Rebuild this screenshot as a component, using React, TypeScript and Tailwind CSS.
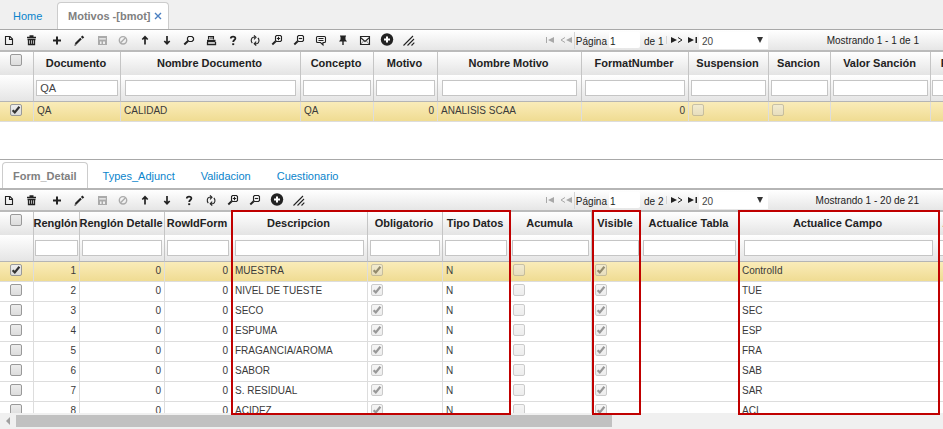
import React from 'react';

type Align = 'left' | 'right';

interface Column {
  title: string;
  width: number;
  align?: Align;
  filter?: string;
}

type Cell = string | boolean;

interface Row {
  selected: boolean;
  cells: Cell[];
}

type IconName =
  | 'new' | 'delete' | 'add' | 'edit' | 'save' | 'cancel' | 'up' | 'down' | 'search' | 'print'
  | 'help' | 'refresh' | 'zoomIn' | 'zoomOut' | 'comment' | 'pin' | 'mail' | 'plusCircle' | 'resize';

const shapes: Record<IconName, React.ReactNode> = {
  new: (
    <>
      <path d="M3.5 3.5H8L10.5 6V11.5H3.5Z" />
      <path d="M7.5 3.5V6.5H10.5" />
    </>
  ),
  delete: (
    <>
      <path d="M3 4.5H12M5.5 3H9.5" strokeWidth="1.3" />
      <path d="M3.5 6.5H11.5M4.5 6V11.5H10.5V6M6.5 7V11M8.5 7V11" strokeWidth="1.3" />
    </>
  ),
  add: <path d="M7 3.5V11.5M3 7.5H11" strokeWidth="2" />,
  edit: (
    <>
      <path d="M3.5 11L9 5.5" strokeWidth="2.2" />
      <path d="M9.8 4.8L11.3 3.3" strokeWidth="2.6" />
      <path d="M2.5 12.2L4 11.8" />
    </>
  ),
  save: (
    <>
      <path d="M4 3H13V12H4ZM5.200 5.200V6.500H11.800V5.200ZM6 8.500V11H7.500V8.500ZM9 8.500V11H11V8.500Z" fill="currentColor" fillRule="evenodd" stroke="none" />
    </>
  ),
  cancel: (
    <>
      <circle cx="7" cy="7.3" r="3.7" strokeWidth="1.4" />
      <path d="M4.5 9.8L9.5 4.8" strokeWidth="1.4" />
    </>
  ),
  up: <path d="M7 11.5V4M4.3 6.5L7 3.8L9.7 6.5" strokeWidth="1.7" />,
  down: <path d="M7 3V10.5M4.3 8L7 10.7L9.7 8" strokeWidth="1.7" />,
  search: (
    <>
      <path d="M6.5 3.500H10L11.500 5V7L10 8.500H7L5.500 7V5Z" strokeWidth="1.2" />
      <path d="M6 8L2.3 11.5" strokeWidth="2" />
    </>
  ),
  print: (
    <>
      <path d="M4.5 6.5V3.5H9.5V6.5M5.5 5H9" />
      <path d="M3 8H11.5" strokeWidth="2.4" />
      <path d="M3.5 9V11.5H11.5V9M4 11.5H11" strokeWidth="1.3" />
    </>
  ),
  help: (
    <>
      <path d="M4.8 5.4C4.8 3 9.4 3 9.4 5.3C9.4 7 7.2 7 7.2 9" strokeWidth="1.8" />
      <path d="M6.2 11.2H8.2" strokeWidth="1.8" />
    </>
  ),
  refresh: (
    <>
      <path d="M7 4.3H5.2C3 4.8 2.6 8.4 4.3 10M6 2.3L8 4.3L6 6.3" />
      <path d="M7 10.7H8.8C11.3 10.2 11.6 6.6 9.900 5M8.2 8.7L6.2 10.7L8.2 12.7" />
    </>
  ),
  zoomIn: (
    <>
      <path d="M6.500 2.500H10.500L11.500 3.500V7.500L10.500 8.500H6.500L5.500 7.500V3.500Z" />
      <path d="M6.8 5.5H10.2M8.5 3.8V7.2" />
      <path d="M5.7 8.2L2.3 11.5" strokeWidth="1.9" />
    </>
  ),
  zoomOut: (
    <>
      <path d="M6.500 2.500H10.500L11.500 3.500V7.500L10.500 8.500H6.500L5.500 7.500V3.500Z" />
      <path d="M6.8 5.5H10.2" />
      <path d="M5.7 8.2L2.3 11.5" strokeWidth="1.9" />
    </>
  ),
  comment: (
    <>
      <path d="M3.5 3.5H10.5Q11.5 3.5 11.5 4.5V8.5Q11.5 9.5 10.5 9.5H9V12L6.5 9.5H3.5Q2.5 9.5 2.5 8.5V4.5Q2.5 3.5 3.5 3.5Z" />
      <path d="M4.5 5.5H9.5M4.5 7.5H9.5" />
    </>
  ),
  pin: (
    <>
      <path d="M4 2.500H10V3.500H9.500V6.500L11 8.500H3L4.500 6.500V3.500H4Z" fill="currentColor" stroke="none" />
      <path d="M7 8V12" strokeWidth="1.4" />
    </>
  ),
  mail: (
    <>
      <path d="M2.5 3.5H11.5V11.5H2.5Z" />
      <path d="M2.5 4.500L7 8.500L11.5 4.500" />
      <path d="M3 11L5.500 8M11 11L8.500 8" strokeWidth="0.5" />
    </>
  ),
  plusCircle: (
    <>
      <circle cx="7" cy="6.5" r="6.2" fill="currentColor" stroke="none" />
      <path d="M7 3.5V9.5M4 6.5H10" stroke="#fff" strokeWidth="2" />
    </>
  ),
  resize: <path d="M1.5 12.5L11 3M5.5 12.5L12 6M9.5 12.5L12.3 9.7" />,
};

const topTools: [IconName, string][] = [
  ['new', 'Nuevo'], ['delete', 'Eliminar'], ['add', 'Agregar'], ['edit', 'Editar'], ['save', 'Guardar'],
  ['cancel', 'Cancelar'], ['up', 'Subir'], ['down', 'Bajar'], ['search', 'Buscar'], ['print', 'Imprimir'],
  ['help', 'Ayuda'], ['refresh', 'Recargar'], ['zoomIn', 'Acercar'], ['zoomOut', 'Alejar'],
  ['comment', 'Comentario'], ['pin', 'Fijar'], ['mail', 'Correo'], ['plusCircle', 'Más'], ['resize', 'Ajustar'],
];

const detailOnly: IconName[] = ['search', 'print', 'comment', 'pin', 'mail'];
const detailTools = topTools.filter(([name]) => !detailOnly.includes(name));

const topColumns: Column[] = [
  { title: 'Documento', width: 87, filter: 'QA' },
  { title: 'Nombre Documento', width: 180 },
  { title: 'Concepto', width: 73 },
  { title: 'Motivo', width: 64, align: 'right' },
  { title: 'Nombre Motivo', width: 144 },
  { title: 'FormatNumber', width: 107, align: 'right' },
  { title: 'Suspension', width: 80 },
  { title: 'Sancion', width: 62 },
  { title: 'Valor Sanción', width: 100, align: 'right' },
  { title: 'P', width: 30 },
];

const topRows: Row[] = [
  { selected: true, cells: ['QA', 'CALIDAD', 'QA', '0', 'ANALISIS SCAA', '0', false, false, '', ''] },
];

const detailColumns: Column[] = [
  { title: 'Renglón', width: 46, align: 'right' },
  { title: 'Renglón Detalle', width: 85, align: 'right' },
  { title: 'RowIdForm', width: 67, align: 'right' },
  { title: 'Descripcion', width: 136 },
  { title: 'Obligatorio', width: 75 },
  { title: 'Tipo Datos', width: 67 },
  { title: 'Acumula', width: 82 },
  { title: 'Visible', width: 49 },
  { title: 'Actualice Tabla', width: 98 },
  { title: 'Actualice Campo', width: 200 },
  { title: 'A', width: 18 },
];

const details: [string, string][] = [
  ['MUESTRA', 'ControlId'],
  ['NIVEL DE TUESTE', 'TUE'],
  ['SECO', 'SEC'],
  ['ESPUMA', 'ESP'],
  ['FRAGANCIA/AROMA', 'FRA'],
  ['SABOR', 'SAB'],
  ['S. RESIDUAL', 'SAR'],
  ['ACIDEZ', 'ACI'],
];

const detailRows: Row[] = details.map(([name, field], i) => ({
  selected: i === 0,
  cells: [String(i + 1), '0', '0', name, true, 'N', false, true, '', field, ''],
}));

function Icon({ name }: { name: IconName }) {
  return (
    <svg viewBox="0 0 14 14" className="size-[14px]" fill="none" stroke="currentColor" strokeWidth="1.1" aria-hidden="true">
      {shapes[name]}
    </svg>
  );
}

function Check({ label, checked = false, disabled = false }: { label: string; checked?: boolean; disabled?: boolean }) {
  return (
    <span className={`relative block size-3 ${disabled ? 'opacity-50' : ''}`}>
      <input
        type="checkbox"
        aria-label={label}
        defaultChecked={checked}
        disabled={disabled}
        className="peer block size-3 appearance-none rounded-[2px] border border-[#999] bg-linear-to-b from-[#ededed] to-[#dcdcdc]"
      />
      <svg viewBox="0 0 12 12" className="pointer-events-none absolute inset-0 hidden size-3 peer-checked:block" fill="none" stroke="#333" strokeWidth="2.2" aria-hidden="true">
        <path d="M2.6 6.2L4.8 8.4L9.4 2.8" />
      </svg>
    </span>
  );
}

function PagerArrow({ label, disabled = false, children }: { label: string; disabled?: boolean; children: React.ReactNode }) {
  return (
    <button type="button" aria-label={label} disabled={disabled} className={disabled ? 'text-[#a8a8a8]' : 'text-[#222]'}>
      <svg viewBox="0 0 12 8" className="h-2 w-3" fill="currentColor" aria-hidden="true">
        {children}
      </svg>
    </button>
  );
}

function Toolbar({ id, tools, pages, summary }: { id: string; tools: [IconName, string][]; pages: string; summary: string }) {
  return (
    <div className="flex h-[22px] items-center border-b-2 border-[#bbb] bg-linear-to-b from-white to-[#e6e6e6] text-[10px] text-[#222]">
      <div className="flex flex-1 items-center gap-1">
        {tools.map(([name, label]) => (
          <button
            key={name}
            type="button"
            aria-label={label}
            disabled={name === 'save' || name === 'cancel'}
            className={`flex w-[18px] shrink-0 justify-center disabled:text-[#aaa] ${name === 'add' ? 'ml-1' : ''}`}
          >
            <Icon name={name} />
          </button>
        ))}
      </div>
      <div className="flex shrink-0 items-center">
        <div className="mr-[2px] flex gap-1">
          <PagerArrow label="Primera página" disabled>
            <path d="M2 1H3V7H2ZM10 1V7L4 4Z" />
          </PagerArrow>
          <PagerArrow label="Página anterior" disabled>
            <path d="M12 1V7L6 4Z" />
            <path d="M5 1.5L1 4L5 6.5" fill="none" stroke="currentColor" />
          </PagerArrow>
        </div>
        <label htmlFor={`${id}-page`} className="border-l border-[#d5d5d5] pt-[2px] pl-px">Página</label>
        <input
          id={`${id}-page`}
          defaultValue="1"
          className="ml-[2px] h-4 w-[31px] rounded-[2px] bg-white px-px pt-[2px] text-[10px]"
        />
        <span className="ml-1 w-[22px] pt-[2px]">{pages}</span>
        <div className="flex gap-1 border-l border-[#d5d5d5] pl-1">
          <PagerArrow label="Página siguiente">
            <path d="M0 1V7L6 4Z" />
            <path d="M7 1.5L11 4L7 6.5" fill="none" stroke="currentColor" />
          </PagerArrow>
          <PagerArrow label="Última página">
            <path d="M1 1V7L7 4ZM8.500 1H10V7H8.500Z" />
          </PagerArrow>
        </div>
        <div className="relative w-[69px]">
          <select
            aria-label="Registros por página"
            className="block h-[17px] w-full appearance-none bg-white pt-[2px] pl-[3px] text-[10px] text-[#444]"
          >
            <option>20</option>
          </select>
          <svg viewBox="0 0 6 6" className="pointer-events-none absolute top-[5px] right-[5px] size-[6px]" fill="#333" aria-hidden="true">
            <path d="M0 0H6L3 6Z" />
          </svg>
        </div>
      </div>
      <div className="w-[175px] shrink-0 pr-6 text-right">{summary}</div>
    </div>
  );
}

function Grid({ name, columns, rows }: { name: string; columns: Column[]; rows: Row[] }) {
  const total = columns.reduce((sum, column) => sum + column.width, 34);
  return (
    <table aria-label={name} className="table-fixed border-separate border-spacing-0" style={{ width: total }}>
      <colgroup>
        <col className="w-[34px]" />
        {columns.map((column) => (
          <col key={column.title} style={{ width: column.width }} />
        ))}
      </colgroup>
      <thead>
        <tr className="h-[23px] bg-linear-to-b from-white to-[#e4e4e4]">
          <th className="border-r border-[#c5c5c5] p-0 pt-[2px] pl-[10px] align-top">
            <Check label="Seleccionar todo" />
          </th>
          {columns.map((column) => (
            <th key={column.title} scope="col" className="border-r border-[#c5c5c5] p-0 pb-[2px] text-[11px] leading-[14px] font-bold whitespace-nowrap text-[#222]">
              <span className="flex justify-center pr-[2px]">{column.title}</span>
            </th>
          ))}
        </tr>
        <tr className="h-[27px] bg-linear-to-b from-white to-[#e4e4e4]">
          <td className="border-r border-b border-[#c5c5c5] border-b-[#b5b5b5] p-0" />
          {columns.map((column) => (
            <td key={column.title} className="border-r border-b border-[#c5c5c5] border-b-[#b5b5b5] p-0">
              <input
                aria-label={`Filtrar ${column.title}`}
                defaultValue={column.filter}
                className="mx-auto block h-4 w-[95%] border border-[#c5c5c5] bg-white px-[3px] text-[11px] text-[#444]"
              />
            </td>
          ))}
        </tr>
      </thead>
      <tbody>
        {rows.map((row, index) => (
          <tr key={index} className={`h-5 ${row.selected ? 'bg-linear-to-b from-[#faecb9] to-[#efdb90]' : 'bg-white'}`}>
            <td className="border-r border-b border-[#ddd] p-0 pt-[2px] pl-[10px] align-top">
              <Check label={`Seleccionar fila ${index + 1}`} checked={row.selected} />
            </td>
            {row.cells.map((cell, i) => (
              <td
                key={columns[i].title}
                className={`border-r border-b border-[#ddd] px-[3px] text-[10px] leading-[14px] whitespace-nowrap text-[#3a3a3a] ${
                  typeof cell === 'boolean' ? 'pt-[2px] pb-0 align-top' : 'pt-0 pb-[2px] align-middle'
                } ${columns[i].align === 'right' ? 'text-right' : 'text-left'}`}
              >
                {typeof cell === 'boolean' ? <Check label={columns[i].title} checked={cell} disabled /> : cell}
              </td>
            ))}
          </tr>
        ))}
      </tbody>
    </table>
  );
}

function Highlight({ className }: { className: string }) {
  return <div className={`pointer-events-none absolute -top-[2px] h-[205px] border-2 border-[#c00000] ${className}`} />;
}

export default function App() {
  return (
    <div className="w-full overflow-hidden bg-white font-['Liberation_Sans',Arial,sans-serif]">
      <nav className="flex h-[30px] items-end border-b border-[#a8a8a8] bg-[#f0f0f0] text-[11px] leading-[14px]">
        <a href="#home" className="w-[57px] pb-[6px] pl-[13px] text-[#0a84cc]">Home</a>
        <div className="flex h-[27px] items-center rounded-t-[4px] border border-b-0 border-[#ccc] bg-white pr-[6px] pl-[10px]">
          <a href="#motivos" className="font-bold text-[#808080]">Motivos -[bmot]</a>
          <button type="button" aria-label="Cerrar" className="ml-1 text-[#4a7fc1]">
            <svg viewBox="0 0 8 8" className="size-2" fill="none" stroke="currentColor" strokeWidth="1.4" aria-hidden="true">
              <path d="M1 1L7 7M7 1L1 7" />
            </svg>
          </button>
        </div>
      </nav>

      <section>
        <Toolbar id="motivos" tools={topTools} pages="de 1" summary="Mostrando 1 - 1 de 1" />
        <div className="overflow-hidden pb-[37px]">
          <Grid name="Motivos" columns={topColumns} rows={topRows} />
        </div>
      </section>

      <section className="border-t border-[#a8a8a8]">
        <nav className="flex h-[30px] items-end border-b-2 border-[#b5b5b5] pl-[2px] text-[11px] leading-[14px]">
          <a href="#form-detail" className="mr-[15px] flex h-[26px] items-center rounded-t-[4px] border border-b-0 border-[#ccc] bg-white px-[10px] font-bold text-[#808080]">
            Form_Detail
          </a>
          <a href="#types-adjunct" className="mr-[26px] pb-[5px] text-[#0a84cc]">Types_Adjunct</a>
          <a href="#validacion" className="mr-[26px] pb-[5px] text-[#0a84cc]">Validacion</a>
          <a href="#cuestionario" className="pb-[5px] text-[#0a84cc]">Cuestionario</a>
        </nav>
        <Toolbar id="detalle" tools={detailTools} pages="de 2" summary="Mostrando 1 - 20 de 21" />
        <div className="relative">
          <div className="h-[201px] overflow-hidden">
            <Grid name="Detalle" columns={detailColumns} rows={detailRows} />
          </div>
          <Highlight className="left-[231px] w-[280px]" />
          <Highlight className="left-[592px] w-[49px]" />
          <Highlight className="left-[738px] w-[202px]" />
          <div className="flex h-4 items-center bg-[#f0f0f0]">
            <button type="button" aria-label="Desplazar a la izquierda" className="flex w-4 justify-center text-[#a0a0a0]">
              <svg viewBox="0 0 4 8" className="h-2 w-1" fill="currentColor" aria-hidden="true">
                <path d="M4 0V8L0 4Z" />
              </svg>
            </button>
            <div className="flex-1">
              <div className="h-3 w-9/14 bg-[#c1c1c1]" />
            </div>
          </div>
        </div>
      </section>
    </div>
  );
}
